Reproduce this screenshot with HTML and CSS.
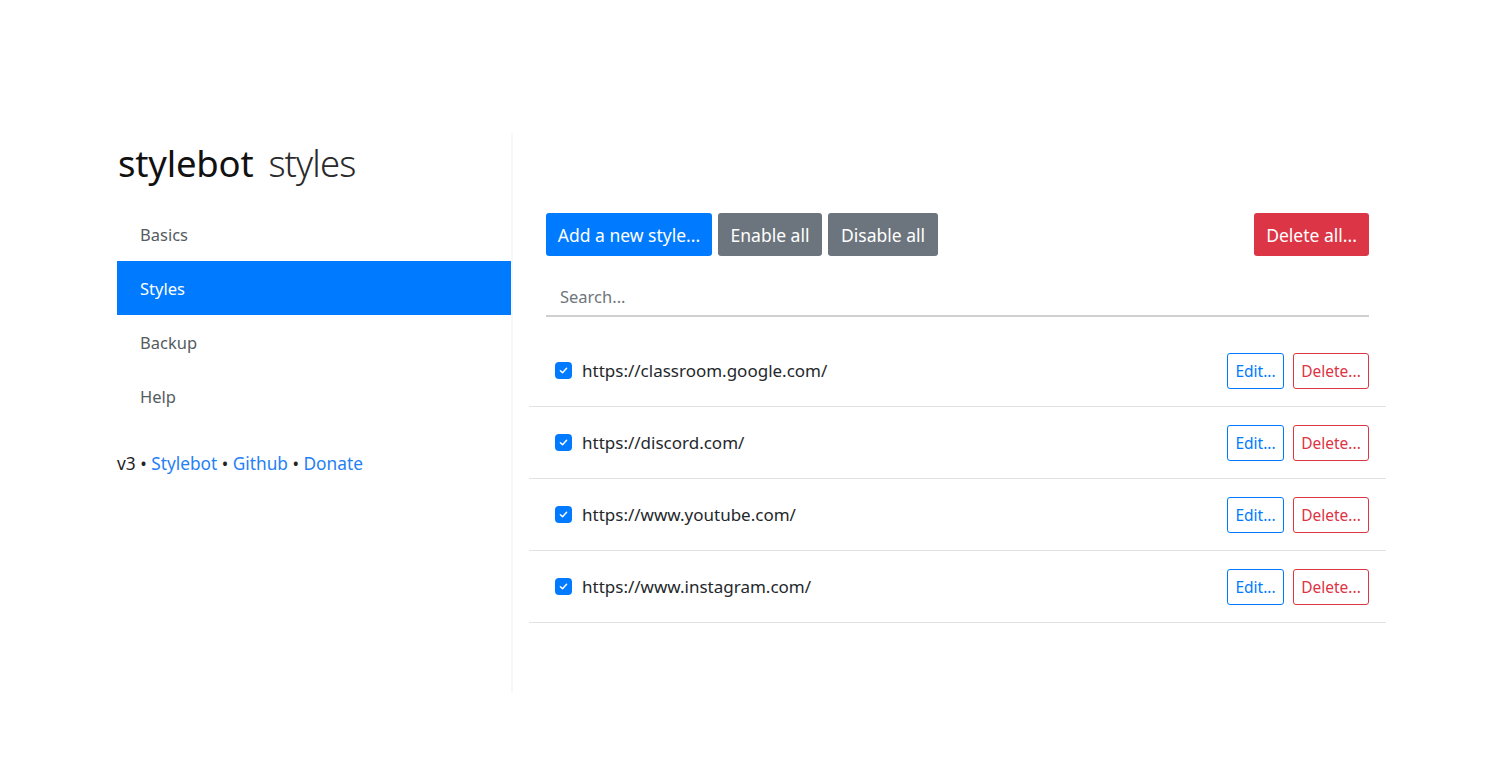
FILE: index.html
```html
<!DOCTYPE html>
<html lang="en">
<head>
<meta charset="utf-8">
<title>Stylebot - Styles</title>
<link rel="stylesheet" href="styles.css">
</head>
<body>
<div class="page">
  <aside class="sidebar">
    <h1 class="brand"><span class="brand-main">stylebot</span><span class="brand-sub">styles</span></h1>
    <nav class="nav">
      <a class="nav-item" href="#">Basics</a>
      <a class="nav-item active" href="#">Styles</a>
      <a class="nav-item" href="#">Backup</a>
      <a class="nav-item" href="#">Help</a>
    </nav>
    <p class="footer">v3 • <a href="#">Stylebot</a> • <a href="#">Github</a> • <a href="#">Donate</a></p>
  </aside>
  <main class="main">
    <div class="toolbar">
      <div class="toolbar-left">
        <button class="btn btn-primary">Add a new style...</button>
        <button class="btn btn-secondary">Enable all</button>
        <button class="btn btn-secondary">Disable all</button>
      </div>
      <button class="btn btn-danger">Delete all...</button>
    </div>
    <div class="search-wrap">
      <input class="search" type="text" placeholder="Search...">
    </div>
    <ul class="list">
      <li class="row">
        <span class="check"><svg viewBox="0 0 16 16" width="11" height="11"><path d="M3.5 8.3 L6.6 11.2 L12.5 4.8" fill="none" stroke="#fff" stroke-width="2.2" stroke-linecap="round" stroke-linejoin="round"/></svg></span>
        <span class="url">https://classroom.google.com/</span>
        <span class="actions"><button class="sbtn sbtn-edit">Edit...</button><button class="sbtn sbtn-del">Delete...</button></span>
      </li>
      <li class="row">
        <span class="check"><svg viewBox="0 0 16 16" width="11" height="11"><path d="M3.5 8.3 L6.6 11.2 L12.5 4.8" fill="none" stroke="#fff" stroke-width="2.2" stroke-linecap="round" stroke-linejoin="round"/></svg></span>
        <span class="url">https://discord.com/</span>
        <span class="actions"><button class="sbtn sbtn-edit">Edit...</button><button class="sbtn sbtn-del">Delete...</button></span>
      </li>
      <li class="row">
        <span class="check"><svg viewBox="0 0 16 16" width="11" height="11"><path d="M3.5 8.3 L6.6 11.2 L12.5 4.8" fill="none" stroke="#fff" stroke-width="2.2" stroke-linecap="round" stroke-linejoin="round"/></svg></span>
        <span class="url">https://www.youtube.com/</span>
        <span class="actions"><button class="sbtn sbtn-edit">Edit...</button><button class="sbtn sbtn-del">Delete...</button></span>
      </li>
      <li class="row">
        <span class="check"><svg viewBox="0 0 16 16" width="11" height="11"><path d="M3.5 8.3 L6.6 11.2 L12.5 4.8" fill="none" stroke="#fff" stroke-width="2.2" stroke-linecap="round" stroke-linejoin="round"/></svg></span>
        <span class="url">https://www.instagram.com/</span>
        <span class="actions"><button class="sbtn sbtn-edit">Edit...</button><button class="sbtn sbtn-del">Delete...</button></span>
      </li>
    </ul>
  </main>
</div>
</body>
</html>
```
FILE: styles.css
```css
* { box-sizing: border-box; }
html, body { margin: 0; padding: 0; background: #fff; }
body {
  font-family: "Noto Sans", "Open Sans", "Liberation Sans", sans-serif;
  color: #212529;
  font-size: 16px;
}
.page {
  display: flex;
  padding-top: 133px;
  padding-left: 117px;
}
.sidebar {
  width: 396px;
  height: 559px;
  border-right: 2px solid #f7f7f7;
  flex: none;
}
.brand {
  margin: 7px 0 0 1px;
  font-size: 36.5px;
  font-weight: 400;
  line-height: 46px;
  height: 67px;
  letter-spacing: -0.2px;
  white-space: nowrap;
}
.brand-main { color: #111; }
.brand-sub { color: #2a2a2a; font-weight: 300; margin-left: 15px; letter-spacing: -0.9px; }
.nav { display: flex; flex-direction: column; }
.nav-item {
  display: block;
  height: 54px;
  line-height: 56px;
  padding-left: 23px;
  color: #555b61;
  text-decoration: none;
  font-size: 16.5px;
}
.nav-item.active { background: #007bff; color: #fff; }
.footer {
  margin: 29px 0 0;
  font-size: 17.3px;
  line-height: 24px;
  color: #222;
  white-space: nowrap;
}
.footer a { color: #2580f5; text-decoration: none; }
.main {
  width: 873px;
  padding-left: 16px;
  flex: none;
}
.toolbar {
  display: flex;
  justify-content: space-between;
  margin-top: 80px;
  padding: 0 17px;
}
.toolbar-left { display: flex; gap: 6px; }
.btn {
  font-family: inherit;
  font-size: 17.5px;
  height: 43px;
  padding: 0;
  border: 1px solid transparent;
  border-radius: 3px;
  color: #fff;
  white-space: nowrap;
  cursor: pointer;
}
.btn-primary { background: #007bff; width: 166px; }
.btn-secondary { background: #6c757d; }
.toolbar-left .btn-secondary:nth-child(2) { width: 104px; }
.toolbar-left .btn-secondary:nth-child(3) { width: 110px; }
.btn-danger { background: #dc3545; width: 115px; }
.search-wrap { padding: 22px 17px 0; }
.search {
  display: block;
  width: 100%;
  height: 39px;
  border: none;
  border-bottom: 2px solid #cfcfcf;
  padding: 0 14px;
  font-family: inherit;
  font-size: 16.5px;
  color: #495057;
  outline: none;
}
.search::placeholder { color: #6f757b; }
.list { list-style: none; margin: 18px 0 0; padding: 0; width: 857px; }
.row {
  display: flex;
  align-items: center;
  height: 72px;
  border-bottom: 1px solid #e2e2e2;
  padding: 0 17px 0 26px;
}
.check {
  width: 17px;
  height: 17px;
  border-radius: 4px;
  background: #007bff;
  display: flex;
  align-items: center;
  justify-content: center;
  margin-right: 10px;
  flex: none;
}
.url { flex: 1; font-size: 17px; color: #24282c; }
.actions { display: flex; gap: 9px; }
.sbtn {
  font-family: inherit;
  font-size: 15.5px;
  height: 36px;
  background: #fff;
  border-radius: 3px;
  padding: 0;
  white-space: nowrap;
  cursor: pointer;
}
.sbtn-edit { border: 1px solid #007bff; color: #007bff; width: 57px; }
.sbtn-del { border: 1px solid #dc3545; color: #dc3545; width: 76px; }
```
